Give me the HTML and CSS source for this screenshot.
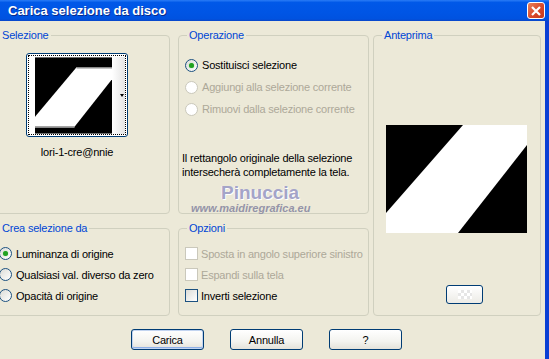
FILE: index.html
```html
<!DOCTYPE html>
<html lang="it">
<head>
    <meta charset="UTF-8">
    <title>Carica selezione da disco</title>
    <link rel="stylesheet" href="styles.css">
</head>
<body>
    <div id="window">
        <div class="titlebar">
            <span class="title">Carica selezione da disco</span>
            <div class="close">
                <svg width="10" height="10" viewBox="0 0 10 10"><path d="M1 1L9 9M9 1L1 9" stroke="#fff" stroke-width="2.2"/></svg>
            </div>
        </div>
        <div class="body">
            <div class="main">
                <div class="left">
                    <fieldset class="box sel">
                        <legend>Selezione</legend>
                        <div class="thumb">
                            <div class="focus">
                                <svg class="thumb-img" width="78" height="77" viewBox="0 0 78 77">
                                    <rect width="78" height="77" fill="#000"/>
                                    <polygon points="42,10 78,10 78,22 40,70 0,70 0,60" fill="#fff"/>
                                    <path d="M42 10.5H78M0 70.5H40" stroke="#8a8a8a" stroke-width="1.5"/>
                                </svg>
                                <div class="strip"><span class="arrow"></span></div>
                            </div>
                        </div>
                        <div class="thumb-name">lori-1-cre@nnie</div>
                    </fieldset>
                    <fieldset class="box op">
                        <legend>Operazione</legend>
                        <div class="rows">
                            <div class="row"><span class="radio on"></span>Sostituisci selezione</div>
                            <div class="row off"><span class="radio"></span>Aggiungi alla selezione corrente</div>
                            <div class="row off"><span class="radio"></span>Rimuovi dalla selezione corrente</div>
                        </div>
                        <p class="note">Il rettangolo originale della selezione<br>intersecherà completamente la tela.</p>
                        <div class="wm-name">Pinuccia</div>
                        <div class="wm-site">www.maidiregrafica.eu</div>
                    </fieldset>
                    <fieldset class="box crea">
                        <legend>Crea selezione da</legend>
                        <div class="rows">
                            <div class="row"><span class="radio on"></span>Luminanza di origine</div>
                            <div class="row"><span class="radio"></span>Qualsiasi val. diverso da zero</div>
                            <div class="row"><span class="radio"></span>Opacità di origine</div>
                        </div>
                    </fieldset>
                    <fieldset class="box opz">
                        <legend>Opzioni</legend>
                        <div class="rows">
                            <div class="row off"><span class="check"></span>Sposta in angolo superiore sinistro</div>
                            <div class="row off"><span class="check"></span>Espandi sulla tela</div>
                            <div class="row"><span class="check"></span>Inverti selezione</div>
                        </div>
                    </fieldset>
                </div>
                <fieldset class="box preview">
                    <legend>Anteprima</legend>
                    <svg class="preview-img" width="141" height="108" viewBox="0 0 141 108">
                        <rect width="141" height="108" fill="#000"/>
                        <polygon points="77,0 141,0 141,20 72,108 0,108 0,88" fill="#fff"/>
                    </svg>
                    <div class="small-btn"><span></span></div>
                </fieldset>
            </div>
            <div class="buttons">
                <div class="btn default">Carica</div>
                <div class="btn">Annulla</div>
                <div class="btn">?</div>
            </div>
        </div>
    </div>
</body>
</html>
```

FILE: styles.css
```css
*{
    margin: 0;
    padding: 0;
    box-sizing: border-box;
}
body{
    width: 549px;
    height: 359px;
    overflow: hidden;
    background: #ECE9D8;
    font-family: "Liberation Sans", Arial, sans-serif;
    font-size: 11px;
    letter-spacing: -0.2px;
    color: #000;
}
#window{
    width: 549px;
    height: 359px;
    display: flex;
    flex-direction: column;
}
.titlebar{
    height: 21px;
    flex: none;
    display: flex;
    align-items: center;
    justify-content: space-between;
    padding: 0 4px 1px 8px;
    background: linear-gradient(#2a7cf6 0, #0058e8 12%, #0055e5 60%, #0052e0 90%, #0a46c8 100%);
}
.title{
    color: #fff;
    font-weight: bold;
    font-size: 13px;
    letter-spacing: 0;
    text-shadow: 1px 1px #0a2a8a;
}
.close{
    width: 18px;
    height: 17px;
    margin-top: 1px;
    border: 1px solid #fff;
    border-radius: 3px;
    background: linear-gradient(135deg, #e8825c, #d9482a 55%, #c43a1c);
    display: flex;
    align-items: center;
    justify-content: center;
}
.body{
    flex: 1;
    border-right: 4px solid #0a3fd4;
}
.main{
    display: flex;
    gap: 4px;
    margin-left: -8px;
    padding-top: 8px;
}
.left{
    display: grid;
    grid-template-columns: 178px 191px;
    grid-template-rows: 185px 94px;
    gap: 8px;
}
.box{
    margin: 0;
    padding: 0;
    min-width: 0;
    border: 1px solid #d0d0bf;
    border-radius: 4px;
    position: relative;
}
.box legend{
    margin-left: 8px;
    padding: 0 2px;
    color: #0046d5;
    line-height: 13px;
}
.sel legend,.crea legend{
    margin-left: 7px;
}
.preview{
    width: 168px;
    height: 287px;
}

/* selezione */
.sel{
    padding-right: 8px;
    display: flex;
    flex-direction: column;
    align-items: center;
}
.thumb{
    width: 102px;
    height: 84px;
    margin-top: 11px;
    border: 1px solid #003c74;
    border-radius: 3px;
    background: #fff;
    padding: 1px;
}
.focus{
    height: 100%;
    border: 1px dotted #000;
    display: flex;
    padding: 1px 0 0 6px;
}
.thumb-img{
    display: block;
}
.strip{
    width: 13px;
    height: 77px;
    background: linear-gradient(to right, #fff, #e4e4e4);
    position: relative;
}
.arrow{
    position: absolute;
    left: 8px;
    top: 37px;
    border-left: 2px solid transparent;
    border-right: 2px solid transparent;
    border-top: 3px solid #000;
}
.thumb-name{
    margin-top: 9px;
    line-height: 13px;
}

/* radio e checkbox */
.rows{
    padding-left: 6px;
}
.op .rows{
    margin-top: 12px;
}
.crea .rows,.opz .rows{
    margin-top: 8px;
}
.row{
    height: 21px;
    display: flex;
    align-items: center;
    white-space: nowrap;
}
.op .row{
    height: 22px;
}
.row.off{
    color: #aca899;
}
.radio{
    flex: none;
    width: 13px;
    height: 13px;
    margin-right: 4px;
    border: 1px solid #1c5180;
    border-radius: 50%;
    background: linear-gradient(135deg, #dcdcd7, #fff);
    display: flex;
    align-items: center;
    justify-content: center;
}
.radio.on::after{
    content: "";
    width: 5px;
    height: 5px;
    border-radius: 50%;
    background: #21a121;
    box-shadow: 0 0 1px #5fd35f;
}
.row.off .radio,.row.off .check{
    border-color: #cac8bb;
    background: #fff;
}
.check{
    flex: none;
    width: 13px;
    height: 13px;
    margin-right: 4px;
    border: 1px solid #1c5180;
    background: linear-gradient(135deg, #dcdcd7, #fff);
}
.opz .check{
    margin-right: 3px;
}
.note{
    margin: 31px 0 0 3px;
    line-height: 14px;
}

/* filigrana */
.wm-name{
    position: absolute;
    left: 42px;
    top: 141px;
    font-size: 19px;
    font-weight: bold;
    line-height: 19px;
    letter-spacing: 0;
    color: #a4a4c8;
    text-shadow: 1px 1px #fff, -1px 0 #f4f4f4;
}
.wm-site{
    position: absolute;
    left: 12px;
    top: 160px;
    font-size: 11px;
    font-weight: bold;
    font-style: italic;
    line-height: 13px;
    letter-spacing: 0;
    color: #9494a8;
}

/* anteprima */
.preview-img{
    display: block;
    margin: 83px 0 0 12px;
}
.small-btn{
    width: 37px;
    height: 19px;
    margin: 52px 0 0 72px;
    border: 1px solid #003c74;
    border-radius: 3px;
    background: linear-gradient(#fff, #ecebe6);
    display: flex;
    align-items: center;
    justify-content: center;
}
.small-btn span{
    width: 14px;
    height: 9px;
    background: repeating-conic-gradient(#e6e6e6 0 25%, #fff 0 50%) 0 0 / 6px 6px;
}

/* pulsanti */
.buttons{
    display: flex;
    gap: 26px;
    padding-left: 131px;
    margin-top: 13px;
}
.btn{
    width: 73px;
    height: 21px;
    border: 1px solid #003c74;
    border-radius: 3px;
    background: linear-gradient(#fff, #f3f3ef 60%, #e4e2da);
    display: flex;
    align-items: center;
    justify-content: center;
}
.btn.default{
    box-shadow: inset 0 0 0 1px #c2d4f0, inset 0 -1px 0 1px #8fb0e8;
}
```
